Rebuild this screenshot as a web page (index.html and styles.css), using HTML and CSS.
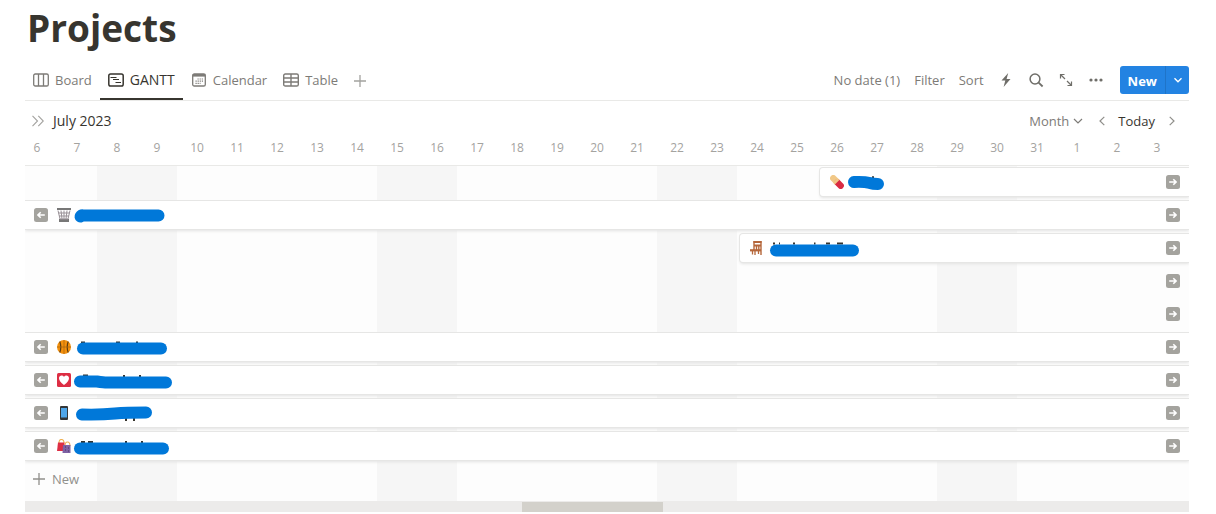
FILE: index.html
```html
<!DOCTYPE html>
<html lang="en">
<head>
<meta charset="utf-8">
<meta name="viewport" content="width=device-width, initial-scale=1">
<title>Projects</title>
<link rel="stylesheet" href="styles.css">
</head>
<body>
<svg class="defs" aria-hidden="true">
  <symbol id="left" viewBox="0 0 14 14"><rect width="14" height="14" rx="2.5" fill="#a4a39e"/><path d="M10.8 7H4M6.7 4.2 3.9 7l2.8 2.8" fill="none" stroke="#fff" stroke-width="1.6"/></symbol>
  <symbol id="right" viewBox="0 0 14 14"><rect width="14" height="14" rx="2.5" fill="#a4a39e"/><path d="M3.2 7H10M7.3 4.2 10.1 7 7.3 9.8" fill="none" stroke="#fff" stroke-width="1.6"/></symbol>
</svg>
<main class="page">
  <h1 class="title">Projects</h1>
  <div class="toolbar">
    <nav class="tabs">
      <button class="tab"><svg width="16" height="14" viewBox="0 0 16 14" fill="none" stroke="currentColor" stroke-width="1.3"><rect x=".7" y="1" width="14.6" height="12" rx="1.6"/><path d="M5.5 1v12M10.5 1v12"/></svg>Board</button>
      <button class="tab active"><svg width="16" height="14" viewBox="0 0 16 14" fill="none" stroke="currentColor" stroke-width="1.5"><rect x=".8" y="1" width="14.4" height="12" rx="1.8"/><path d="M2.500 4.500h6M5 6.500h6M7.500 9.500h5.500" stroke-width="1.100"/></svg>GANTT</button>
      <button class="tab"><svg width="16" height="14" viewBox="0 0 16 14" fill="none" stroke="currentColor" stroke-width="1.300"><rect x="1.700" y="1" width="12.600" height="12" rx="1.600"/><path d="M1.700 2.300h12.600" stroke-width="2.600"/><path d="M6.500 6h5.500M4.500 8.200h7.500M4.500 10.400h5" stroke-width="1.200" stroke-dasharray="1.200 .9"/></svg>Calendar</button>
      <button class="tab"><svg width="16" height="14" viewBox="0 0 16 14" fill="none" stroke="currentColor" stroke-width="1.400"><rect x=".7" y="1" width="14.600" height="12" rx="1.600"/><path d="M1 5h14M1 9h14M8 1v12" /></svg>Table</button>
      <button class="add" aria-label="Add view"><svg width="12" height="12" viewBox="0 0 12 12" stroke="currentColor" stroke-width="1.300"><path d="M6 0v12M0 6h12"/></svg></button>
    </nav>
    <div class="tools">
      <button class="tool">No date (1)</button>
      <button class="tool">Filter</button>
      <button class="tool">Sort</button>
      <button class="tool icon" aria-label="Automations"><svg width="16" height="16" viewBox="0 0 16 16" fill="currentColor"><path d="M10.200 1 3.500 8.600h3.800L5.600 15l6.900-8H8.600z"/></svg></button>
      <button class="tool icon" aria-label="Search"><svg width="16" height="16" viewBox="0 0 16 16" fill="none" stroke="currentColor" stroke-width="1.500"><circle cx="7" cy="7" r="4.900"/><path d="m10.600 10.600 4 3.900" stroke-width="1.800"/></svg></button>
      <button class="tool icon" aria-label="Expand"><svg width="16" height="16" viewBox="0 0 16 16" fill="none" stroke="currentColor" stroke-width="1.200"><path d="M2.500 6.500V2.500h4M3 3l4 4M13.500 9.500v4h-4M13 13 9 9"/></svg></button>
      <button class="tool icon" aria-label="More"><svg width="16" height="16" viewBox="0 0 16 16" fill="currentColor"><circle cx="3" cy="8" r="1.600"/><circle cx="8" cy="8" r="1.600"/><circle cx="13" cy="8" r="1.600"/></svg></button>
      <div class="split">
        <button class="create">New</button>
        <button class="caret" aria-label="Templates"><svg width="10" height="10" viewBox="0 0 10 10" fill="none" stroke="currentColor" stroke-width="1.400"><path d="m1.500 3.200 3.500 3.500 3.500-3.500"/></svg></button>
      </div>
    </div>
  </div>

  <section class="timeline">
    <div class="range">
      <button class="open" aria-label="Show table"><svg width="12" height="12" viewBox="0 0 12 12" fill="none" stroke="currentColor" stroke-width="1.100"><path d="m.5.800 5 5.200-5 5.200M6.300.800l5 5.200-5 5.200"/></svg></button>
      <span class="month">July 2023</span>
      <button class="scale">Month<svg width="10" height="10" viewBox="0 0 10 10" fill="none" stroke="currentColor" stroke-width="1.200"><path d="m1 3 4 4 4-4"/></svg></button>
      <button class="step" aria-label="Previous"><svg width="6" height="10" viewBox="0 0 6 10" fill="none" stroke="currentColor" stroke-width="1.200"><path d="M5.300.900 1 5l4.300 4.100"/></svg></button>
      <button class="today">Today</button>
      <button class="step" aria-label="Next"><svg width="6" height="10" viewBox="0 0 6 10" fill="none" stroke="currentColor" stroke-width="1.200"><path d="M.7.900 5 5 .7 9.100"/></svg></button>
    </div>
    <div class="dates"><div class="days">
      <span>6</span><span>7</span><span>8</span><span>9</span><span>10</span><span>11</span><span>12</span><span>13</span><span>14</span><span>15</span><span>16</span><span>17</span><span>18</span><span>19</span><span>20</span><span>21</span><span>22</span><span>23</span><span>24</span><span>25</span><span>26</span><span>27</span><span>28</span><span>29</span><span>30</span><span>31</span><span>1</span><span>2</span><span>3</span>
    </div></div>
    <div class="grid">
      <div class="row"><div class="bar from-26">
        <svg class="emoji" width="14" height="14" viewBox="0 0 14 14"><path d="m3.300 3.300 4 4" stroke="#f1c887" stroke-width="6.400" stroke-linecap="round"/><path d="m7.500 7.500 3.200 3.200" stroke="#d92b43" stroke-width="6.400" stroke-linecap="round"/><path d="m4.900 9.400 4.500-4.500-2-2-4.500 4.500z" fill="#f1c887"/></svg>
        <svg class="mark" width="100" height="18" viewBox="0 0 100 18"><path d="M29 3v3" stroke="#37352f"/><path d="M10 8q10-.5 16 1 3 1 8 1" /></svg>
        <svg class="jump"><use href="#right"/></svg></div></div>
      <div class="row"><div class="bar full">
        <svg class="back"><use href="#left"/></svg>
        <svg class="emoji" width="14" height="14" viewBox="0 0 14 14"><path d="M0 0h14v2H0zM2 11h10v3H2z" fill="#777"/><path d="M1 2.500 3 11h8l2-8.500M4 2.500l1 8.500M7 2.500V11M10 2.500 9 11M1.500 5h11M2 8h10" fill="none" stroke="#999197" stroke-width="1"/></svg>
        <svg class="mark" width="100" height="18" viewBox="0 0 100 18"><path d="M9.500 9.500q1-1.500 3-1h75"/></svg>
        <svg class="jump"><use href="#right"/></svg></div></div>
      <div class="row"><div class="bar from-24">
        <svg class="emoji" width="14" height="14" viewBox="0 0 14 14" fill="none" stroke="#b5673b"><path d="M3.500 1h8M4 4.500h7" stroke-width="2"/><path d="M4 0v9M11 0v14M6.500 5v4M8.800 5v4" stroke-width="1.400"/><path d="M0 9.300h11" stroke-width="2.200"/><path d="M2.500 10v3.500M5 10v4M8.500 10v3" stroke-width="1.300"/></svg>
        <svg class="mark" width="100" height="18" viewBox="0 0 100 18"><path d="M9 3.500h2M15 3.500h1M29 3.500h2M50 3.500h1.500M62 3.500h4M73 3.500h6" stroke="#37352f" stroke-linecap="butt"/><path d="M12 10.500h77"/></svg>
        <svg class="jump"><use href="#right"/></svg></div></div>
      <div class="row"><div class="bare"><svg class="jump"><use href="#right"/></svg></div></div>
      <div class="row"><div class="bare"><svg class="jump"><use href="#right"/></svg></div></div>
      <div class="row"><div class="bar full">
        <svg class="back"><use href="#left"/></svg>
        <svg class="emoji" width="14" height="14" viewBox="0 0 14 14"><circle cx="7" cy="7" r="7" fill="#f4900c"/><path d="M2.800 1.500q2 5.500 0 11M11.200 1.500q-2 5.500 0 11" fill="none" stroke="#5c3d13" stroke-width="1.200"/><path d="M7 0v14M0 7h14" stroke="#a36413" stroke-width=".7"/></svg>
        <svg class="mark" width="100" height="18" viewBox="0 0 100 18"><path d="M10 3.500h4M45 3.500h4M65 3.500h2" stroke="#37352f" stroke-linecap="butt"/><path d="M12 9.500h78"/></svg>
        <svg class="jump"><use href="#right"/></svg></div></div>
      <div class="row"><div class="bar full">
        <svg class="back"><use href="#left"/></svg>
        <svg class="emoji" width="14" height="14" viewBox="0 0 14 14"><rect width="14" height="14" rx="1.500" fill="#dd2e44"/><path d="M7 12Q2 8.500 2 5.300C2 2 6 1.700 7 4c1-2.300 5-2 5 1.300Q12 8.500 7 12" fill="#fff"/></svg>
        <svg class="mark" width="104" height="18" viewBox="0 0 104 18"><path d="M12 3.500h5M53 3v3M69 3v3" stroke="#37352f" stroke-linecap="butt"/><path d="M9 9.500h17q7 1 10 1h59"/></svg>
        <svg class="jump"><use href="#right"/></svg></div></div>
      <div class="row"><div class="bar full">
        <svg class="back"><use href="#left"/></svg>
        <svg class="emoji" width="14" height="14" viewBox="0 0 14 14"><rect x="3" width="8" height="14" rx="1" fill="#333638"/><path d="M4 2h6v9.500H4z" fill="#4ea6ea"/></svg>
        <svg class="mark" width="100" height="18" viewBox="0 0 100 18"><path d="M55 12v4M63 12v4" stroke="#37352f" stroke-linecap="butt"/><path d="M11 9.500Q30 10 44 8.500 55 7.500 75 7.500"/></svg>
        <svg class="jump"><use href="#right"/></svg></div></div>
      <div class="row"><div class="bar full">
        <svg class="back"><use href="#left"/></svg>
        <svg class="emoji" width="14" height="14" viewBox="0 0 14 14"><path d="M2 4q0-3.500 2.500-3.500T7 4M8 7q0-4 2.500-4T13 7" fill="none" stroke="#efb052" stroke-width="1.100"/><path d="M1 3.500h6.500V12H0z" fill="#dd2e44"/><path d="M6 6h7.500v8H5.500z" fill="#7e62a4"/><path d="M8 8h1M11 9h1M8 11h1M11 12h1" stroke="#48345e"/></svg>
        <svg class="mark" width="100" height="18" viewBox="0 0 100 18"><path d="M10 4h4M17 4h5M54 4h2M70 4h2" stroke="#37352f" stroke-linecap="butt"/><path d="M9 10.500h83"/></svg>
        <svg class="jump"><use href="#right"/></svg></div></div>
      <button class="new-row"><svg width="12" height="12" viewBox="0 0 12 12" stroke="currentColor" stroke-width="1.300"><path d="M6 0v12M0 6h12"/></svg>New</button>
    </div>
    <div class="scroll"><div class="thumb"></div></div>
  </section>
</main>
</body>
</html>
```
FILE: styles.css
```css
* { box-sizing: border-box; }
body { margin: 0; background: #fff; color: #37352f; font: 13px/20px "Open Sans", "Noto Sans", sans-serif; overflow: hidden; }
button { margin: 0; padding: 0; border: 0; background: none; font: inherit; color: inherit; display: flex; align-items: center; cursor: pointer; white-space: nowrap; }
svg { display: block; flex: none; }
.defs { position: absolute; width: 0; height: 0; }
.page { padding: 3px 27px 0 25px; }
.title { margin: 0; padding-left: 2px; font-size: 37px; line-height: 49px; font-weight: 700; }
.toolbar { display: flex; justify-content: space-between; height: 49px; padding-top: 10px; border-bottom: 1px solid #e9e9e7; }
.tabs { display: flex; }
.tab { gap: 6px; padding: 0 8px; color: #7d7b77; font-weight: 500; border-bottom: 2px solid transparent; }
.active { color: #37352f; border-color: #37352f; font-size: 14px; }
.add { padding: 0 8px; color: #a3a29f; }
.tools { display: flex; height: 32px; margin-top: 2px; gap: 14px; color: #7d7b77; }
.tools .icon { color: #6f6e69; }
.split { display: flex; height: 28px; margin: 2px 0 0 2px; border-radius: 3px; overflow: hidden; background: #2383e2; color: #fff; }
.create { padding: 2px 8px 0; font-weight: 700; }
.caret { width: 24px; justify-content: center; border-left: 1px solid #1f74c8; }
.range { display: flex; align-items: center; height: 39px; padding: 0 14px 0 7px; }
.open { color: #a3a29f; }
.month { margin: 0 auto 0 9px; font-size: 14px; font-weight: 500; }
.scale { gap: 4px; color: #7d7b77; }
.step { color: #8f8e8a; }
.scale + .step { margin-left: 16px; }
.today { margin: 0 14px 0 13px; }
.dates { overflow: hidden; height: 26px; border-bottom: 1px solid #e9e9e7; }
.days { display: grid; grid-template-columns: repeat(29, 40px); margin-left: -8px; text-align: center; font-size: 12px; line-height: 16px; color: #a4a39f; }
.grid { overflow: hidden; padding-bottom: 7px; background: linear-gradient(90deg, #f6f6f6 80px, #fdfdfd 80px) 72px 0 / 280px 100%; }
.row { display: grid; grid-template-columns: 32px repeat(27, 40px) 1fr; height: 33px; padding-top: 2px; }
.bar, .bare { display: flex; align-items: center; height: 28px; grid-column: 1 / -1; }
.bar { background: #fff; box-shadow: 0 0 0 1px #e6e6e5, 0 2px 3px #e3e3e2; }
.full { padding-left: 9px; }
.from-24, .from-26 { margin-left: 3px; padding-left: 10px; border-radius: 3px 0 0 3px; }
.from-24 { grid-column-start: 19; }
.from-26 { grid-column-start: 21; }
.back { width: 14px; height: 14px; margin-right: 9px; }
.mark { margin-top: 2px; fill: none; stroke: #0078d9; stroke-width: 12px; stroke-linecap: round; }
.mark path[stroke] { stroke-width: 2px; }
.jump { width: 14px; height: 14px; margin: 0 9px 0 auto; }
.new-row { gap: 7px; height: 31px; padding-left: 8px; color: #91908c; }
.scroll { height: 11px; padding-top: 1px; background: #ecebea; }
.thumb { height: 10px; width: 141px; margin-left: 497px; background: #d3d1cb; }
```
